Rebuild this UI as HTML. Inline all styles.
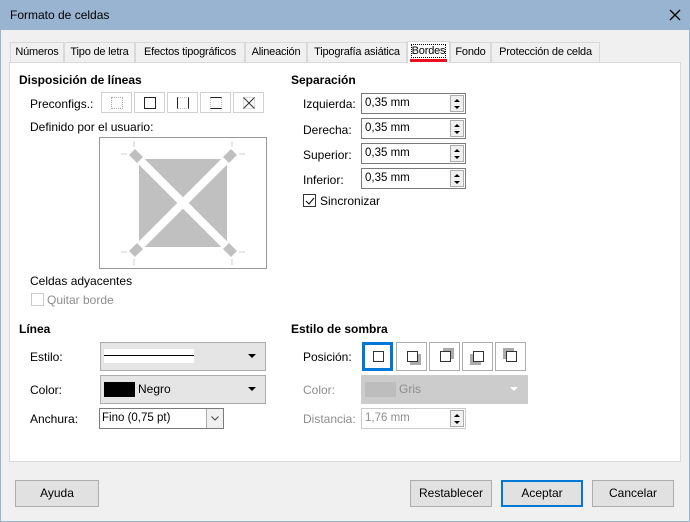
<!DOCTYPE html><html><head><style>
*{box-sizing:border-box;margin:0;padding:0}
body{width:690px;height:522px;overflow:hidden;background:#f0f0f0;font:12px "Liberation Sans",sans-serif;color:#000;position:relative}
.a{position:absolute;white-space:nowrap}
.tab{position:absolute;top:42px;height:20px;border:1px solid #d9d9d9;border-bottom:none;background:#f0f0f0;padding:3px 0 0;font-size:11px;white-space:nowrap;text-align:center;letter-spacing:-0.2px;overflow:hidden}
.btn{position:absolute;height:27px;border:1px solid #adadad;background:#e1e1e1;text-align:center;line-height:25px}
.spin{position:absolute;width:105px;height:21px;border:1px solid #7a7a7a;background:#fff;padding:3px 3px;font-size:11.5px}
.spin i{position:absolute;right:1px;top:1px;width:14px;height:17px;border:1px solid #adadad;background:#f0f0f0}
.spin i:before{content:"";position:absolute;left:3px;top:3px;border:3px solid transparent;border-bottom:3px solid #000;border-top:0}
.spin i:after{content:"";position:absolute;left:3px;top:10px;border:3px solid transparent;border-top:3px solid #000;border-bottom:0}
.pb{position:absolute;top:92px;width:31px;height:21px;border:1px solid #d0d0d0;background:#fff}
.sb{position:absolute;top:342px;width:31px;height:29px;border:1px solid #adadad;background:#fff}
.sq{position:absolute;left:10px;top:8px;width:11px;height:11px;border:1px solid #333;background:#fff}
.sh{position:absolute;width:11px;height:11px;background:#aaa}
b{font-weight:bold}
.dd{position:absolute;right:9px;top:11px;border:4px solid transparent;border-top:4px solid #000;border-bottom:0}
</style></head><body>
<div class="a" style="left:0;top:0;width:690px;height:522px;border:1px solid #99b4d1"></div>
<div class="a" style="left:0;top:0;width:690px;height:30px;background:#99b4d1"></div>
<div class="a" style="left:10px;top:8px">Formato de celdas</div>
<svg class="a" style="left:669px;top:9px" width="12" height="12"><path d="M1 1L11 11M11 1L1 11" stroke="#000" stroke-width="1.3"/></svg>
<div class="a" style="left:9px;top:62px;width:672px;height:400px;background:#fff;border:1px solid #d9d9d9"></div>
<div class="tab" style="left:10px;width:54px">Números</div>
<div class="tab" style="left:64px;width:71px">Tipo de letra</div>
<div class="tab" style="left:135px;width:110px">Efectos tipográficos</div>
<div class="tab" style="left:245px;width:62px">Alineación</div>
<div class="tab" style="left:307px;width:100px">Tipografía asiática</div>
<div class="tab" style="left:407px;top:41px;height:22px;width:43px;background:#fff;padding-top:3px"><span style="border:1px dotted #000">Bordes</span></div>
<div class="a" style="left:410px;top:59px;width:37px;height:3px;background:#e81123"></div>
<div class="tab" style="left:450px;width:41px">Fondo</div>
<div class="tab" style="left:491px;width:109px">Protección de celda</div>

<div class="a" style="left:19px;top:73px"><b>Disposición de líneas</b></div>
<div class="a" style="left:30px;top:97px">Preconfigs.:</div>
<div class="pb" style="left:101px"><div style="position:absolute;left:9px;top:4px;width:12px;height:12px;border:1px dotted #aaa"></div></div>
<div class="pb" style="left:134px"><div style="position:absolute;left:9px;top:4px;width:12px;height:12px;border:1px solid #222"></div></div>
<div class="pb" style="left:167px"><div style="position:absolute;left:9px;top:4px;width:12px;height:12px;border:1px dotted #bbb;border-left:1px solid #222;border-right:1px solid #222"></div></div>
<div class="pb" style="left:200px"><div style="position:absolute;left:9px;top:4px;width:12px;height:12px;border:1px dotted #bbb;border-top:1px solid #222;border-bottom:1px solid #222"></div></div>
<div class="pb" style="left:233px"><svg style="position:absolute;left:8px;top:3px" width="14" height="14"><rect x="1.5" y="1.5" width="11" height="11" fill="none" stroke="#bbb" stroke-dasharray="1 1"/><path d="M1.5 1.5L12.5 12.5M12.5 1.5L1.5 12.5" stroke="#333"/></svg></div>
<div class="a" style="left:30px;top:120px">Definido por el usuario:</div>
<svg class="a" style="left:99px;top:137px" width="168" height="132">
<rect x="0.5" y="0.5" width="167" height="131" fill="#fff" stroke="#999"/>
<rect x="40" y="22" width="88" height="88" fill="#c0c0c0"/>
<g stroke="#fff" stroke-width="8"><line x1="34" y1="16" x2="134" y2="116"/><line x1="134" y1="16" x2="34" y2="116"/></g>
<g fill="#c0c0c0"><polygon points="30,18 36,12 44,20 38,26"/><polygon points="138,18 132,12 124,20 130,26"/><polygon points="30,114 36,120 44,112 38,106"/><polygon points="138,114 132,120 124,112 130,106"/></g>
<g stroke="#ccc"><line x1="35" y1="4" x2="35" y2="10"/><line x1="22" y1="17" x2="28" y2="17"/><line x1="133" y1="4" x2="133" y2="10"/><line x1="140" y1="17" x2="146" y2="17"/><line x1="35" y1="122" x2="35" y2="128"/><line x1="22" y1="115" x2="28" y2="115"/><line x1="133" y1="122" x2="133" y2="128"/><line x1="140" y1="115" x2="146" y2="115"/></g></svg>
<div class="a" style="left:30px;top:274px">Celdas adyacentes</div>
<div class="a" style="left:31px;top:293px;width:13px;height:13px;border:1px solid #ccc;background:#fff"></div>
<div class="a" style="left:47px;top:293px;color:#8d8d8d">Quitar borde</div>

<div class="a" style="left:291px;top:73px"><b>Separación</b></div>
<div class="a" style="left:303px;top:97px">Izquierda:</div>
<div class="a" style="left:303px;top:123px">Derecha:</div>
<div class="a" style="left:303px;top:148px">Superior:</div>
<div class="a" style="left:303px;top:173px">Inferior:</div>
<div class="spin" style="left:361px;top:93px">0,35 mm<i></i></div>
<div class="spin" style="left:361px;top:118px">0,35 mm<i></i></div>
<div class="spin" style="left:361px;top:143px">0,35 mm<i></i></div>
<div class="spin" style="left:361px;top:168px">0,35 mm<i></i></div>
<div class="a" style="left:303px;top:194px;width:13px;height:13px;border:1px solid #333;background:#fff"><svg style="position:absolute;left:1px;top:1px" width="10" height="10"><path d="M1 5L4 8L9 2" stroke="#000" fill="none"/></svg></div>
<div class="a" style="left:320px;top:194px">Sincronizar</div>

<div class="a" style="left:19px;top:322px"><b>Línea</b></div>
<div class="a" style="left:30px;top:350px">Estilo:</div>
<div class="a" style="left:30px;top:383px">Color:</div>
<div class="a" style="left:30px;top:412px">Anchura:</div>
<div class="a" style="left:100px;top:342px;width:166px;height:29px;border:1px solid #adadad;background:#e5e5e5"><div style="position:absolute;left:3px;top:6px;width:90px;height:14px;background:#fff"><div style="margin-top:6px;height:1px;background:#000"></div></div><i class="dd"></i></div>
<div class="a" style="left:100px;top:375px;width:166px;height:29px;border:1px solid #adadad;background:#e5e5e5"><div style="position:absolute;left:3px;top:6px;width:31px;height:15px;background:#000"></div><span style="position:absolute;left:37px;top:6px">Negro</span><i class="dd"></i></div>
<div class="a" style="left:99px;top:408px;width:125px;height:21px;border:1px solid #7a7a7a;background:#fff;padding:3px 2px;font-size:11.5px">Fino (0,75 pt)<div style="position:absolute;right:0;top:0;width:17px;height:19px;border-left:1px solid #adadad;background:#f0f0f0"><svg style="position:absolute;left:4px;top:7px" width="8" height="5"><path d="M0.5 0.5L4 4L7.5 0.5" stroke="#444" fill="none"/></svg></div></div>

<div class="a" style="left:291px;top:322px"><b>Estilo de sombra</b></div>
<div class="a" style="left:303px;top:350px">Posición:</div>
<div class="sb" style="left:362px;border:3px solid #0078d7"><div class="sq" style="left:8px;top:6px"></div></div>
<div class="sb" style="left:396px"><div class="sh" style="left:13px;top:11px"></div><div class="sq"></div></div>
<div class="sb" style="left:429px"><div class="sh" style="left:13px;top:5px"></div><div class="sq"></div></div>
<div class="sb" style="left:462px"><div class="sh" style="left:7px;top:11px"></div><div class="sq"></div></div>
<div class="sb" style="left:495px"><div class="sh" style="left:7px;top:5px"></div><div class="sq"></div></div>
<div class="a" style="left:303px;top:383px;color:#8d8d8d">Color:</div>
<div class="a" style="left:361px;top:375px;width:167px;height:29px;border:1px solid #ccc;background:#ccc"><div style="position:absolute;left:3px;top:6px;width:31px;height:15px;background:#bdbdbd"></div><span style="position:absolute;left:37px;top:6px;color:#8d8d8d">Gris</span><i class="dd" style="border-top-color:#fff"></i></div>
<div class="a" style="left:303px;top:412px;color:#8d8d8d">Distancia:</div>
<div class="spin" style="left:361px;top:408px;border-color:#ccc;color:#8d8d8d">1,76 mm<i></i></div>

<div class="btn" style="left:15px;top:480px;width:84px">Ayuda</div>
<div class="btn" style="left:410px;top:480px;width:82px">Restablecer</div>
<div class="btn" style="left:501px;top:480px;width:82px;border:2px solid #0078d7;line-height:23px">Aceptar</div>
<div class="btn" style="left:592px;top:480px;width:82px">Cancelar</div>
</body></html>
